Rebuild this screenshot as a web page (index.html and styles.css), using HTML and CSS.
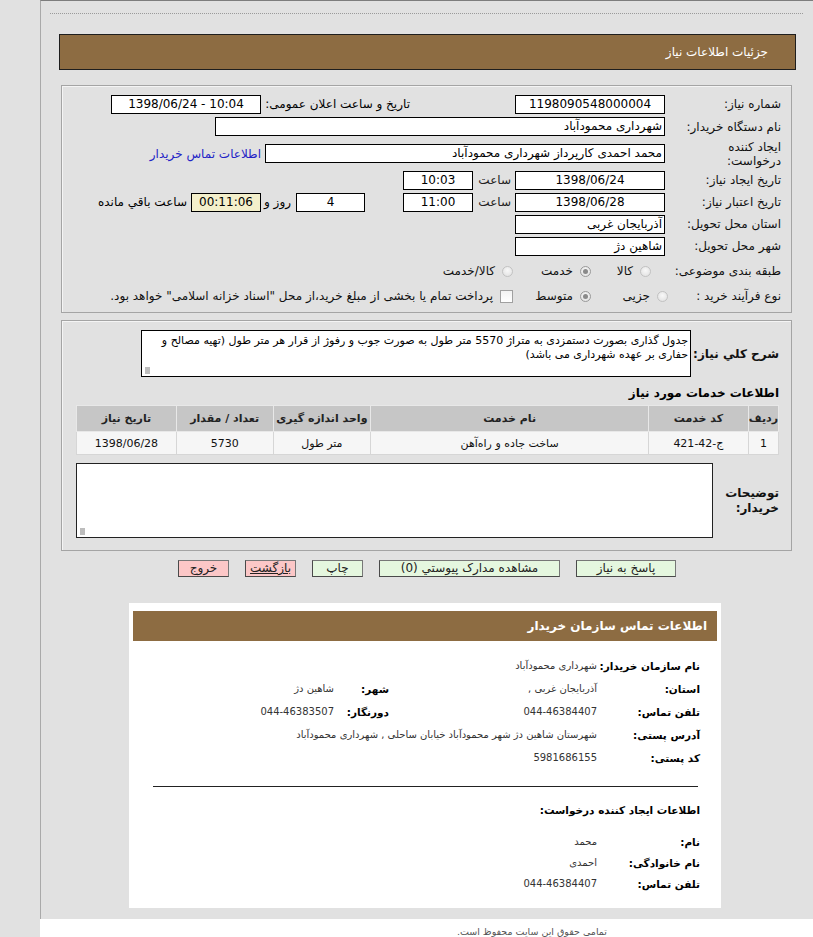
FILE: index.html
```html
<!DOCTYPE html>
<html lang="fa" dir="rtl">
<head>
<meta charset="utf-8">
<title>جزئیات اطلاعات نیاز</title>
<link rel="stylesheet" href="styles.css">
</head>
<body>
<div class="page">
  <div class="dots"></div>
  <div class="titlebar">جزئیات اطلاعات نیاز</div>

  <div class="box form">
    <div class="row h22">
      <div class="lbl">شماره نیاز:</div>
      <div class="inp w150 c">1198090548000004</div>
      <div class="ann">تاریخ و ساعت اعلان عمومی:</div>
      <div class="inp w150 c ltr">1398/06/24 - 10:04</div>
    </div>
    <div class="row h23">
      <div class="lbl">نام دستگاه خریدار:</div>
      <div class="inp w450">شهرداری محمودآباد</div>
    </div>
    <div class="row h31">
      <div class="lbl two">ایجاد کننده<br>درخواست:</div>
      <div class="inp w400">محمد احمدی کارپرداز شهرداری محمودآباد</div>
      <a class="link">اطلاعات تماس خریدار</a>
    </div>
    <div class="row h22">
      <div class="lbl">تاریخ ایجاد نیاز:</div>
      <div class="inp w150 c">1398/06/24</div>
      <div class="sa">ساعت</div>
      <div class="inp w70 c">10:03</div>
    </div>
    <div class="row h22">
      <div class="lbl">تاریخ اعتبار نیاز:</div>
      <div class="inp w150 c">1398/06/28</div>
      <div class="sa">ساعت</div>
      <div class="inp w70 c">11:00</div>
      <div class="inp w69 c days">4</div>
      <div class="ruz">روز و</div>
      <div class="inp w70 c remain">00:11:06</div>
      <div class="rest">ساعت باقي مانده</div>
    </div>
    <div class="row h22">
      <div class="lbl">استان محل تحویل:</div>
      <div class="inp w150">آذربایجان غربی</div>
    </div>
    <div class="row h22">
      <div class="lbl">شهر محل تحویل:</div>
      <div class="inp w150">شاهین دژ</div>
    </div>
    <div class="row h26">
      <div class="lbl">طبقه بندی موضوعی:</div>
      <div class="opt o1"><span class="radio"></span><span>کالا</span></div>
      <div class="opt o2"><span class="radio on"></span><span>خدمت</span></div>
      <div class="opt o3"><span class="radio"></span><span>کالا/خدمت</span></div>
    </div>
    <div class="row h24">
      <div class="lbl">نوع فرآیند خرید :</div>
      <div class="opt o1b"><span class="radio"></span><span>جزیی</span></div>
      <div class="opt o2"><span class="radio on"></span><span>متوسط</span></div>
      <div class="opt o3"><span class="check"></span><span>پرداخت تمام یا بخشی از مبلغ خرید،از محل "اسناد خزانه اسلامی" خواهد بود.</span></div>
    </div>
  </div>

  <div class="box desc">
    <div class="drow">
      <div class="blbl">شرح کلي نیاز:</div>
      <div class="area a1">جدول گذاری بصورت دستمزدی به متراژ 5570 متر طول به صورت جوب و رفوژ از قرار هر متر طول (تهیه مصالح و<br>حفاری بر عهده شهرداری می باشد)<span class="grip"></span></div>
    </div>
    <div class="sect">اطلاعات خدمات مورد نیاز</div>
    <table class="grid">
      <thead>
        <tr>
          <th class="c1">ردیف</th>
          <th class="c2">کد خدمت</th>
          <th class="c3">نام خدمت</th>
          <th class="c4">واحد اندازه گیری</th>
          <th class="c5">تعداد / مقدار</th>
          <th class="c6">تاریخ نیاز</th>
        </tr>
      </thead>
      <tbody>
        <tr>
          <td>1</td>
          <td>ج-42-421</td>
          <td>ساخت جاده و راه‌آهن</td>
          <td>متر طول</td>
          <td>5730</td>
          <td>1398/06/28</td>
        </tr>
      </tbody>
    </table>
    <div class="drow notes">
      <div class="blbl nl">توضیحات<br>خریدار:</div>
      <div class="area a2"><span class="grip"></span></div>
    </div>
  </div>

  <div class="buttons">
    <div class="btn green b100">پاسخ به نیاز</div>
    <div class="btn green b181">مشاهده مدارک پیوستي (0)</div>
    <div class="btn green b51">چاپ</div>
    <div class="btn pink b51 ul">بازگشت</div>
    <div class="btn pink b51">خروج</div>
  </div>

  <div class="card">
    <div class="cardhead">اطلاعات تماس سازمان خریدار</div>
    <div class="info">
      <div class="k">نام سازمان خریدار:</div>
      <div class="v span3">شهرداری محمودآباد</div>

      <div class="k">استان:</div>
      <div class="v">آذربایجان غربی ,</div>
      <div class="k">شهر:</div>
      <div class="v">شاهین دژ</div>

      <div class="k">تلفن تماس:</div>
      <div class="v">044-46384407</div>
      <div class="k">دورنگار:</div>
      <div class="v">044-46383507</div>

      <div class="k">آدرس پستی:</div>
      <div class="v span3">شهرستان شاهین دژ شهر محمودآباد خیابان ساحلی , شهرداری محمودآباد</div>

      <div class="k">کد پستی:</div>
      <div class="v span3">5981686155</div>
    </div>
    <div class="rule"></div>
    <div class="subhead">اطلاعات ایجاد کننده درخواست:</div>
    <div class="info info2">
      <div class="k">نام:</div>
      <div class="v span3">محمد</div>
      <div class="k">نام خانوادگی:</div>
      <div class="v span3">احمدی</div>
      <div class="k">تلفن تماس:</div>
      <div class="v span3">044-46384407</div>
    </div>
  </div>
</div>
<div class="footer"><span class="copy">تمامی حقوق این سایت محفوظ است.</span></div>
</body>
</html>
```
FILE: styles.css
```css
* { box-sizing: border-box; }
html, body { margin: 0; padding: 0; }
body {
  background: #e1e1e1;
  font-family: "DejaVu Sans", sans-serif;
  font-size: 12px;
  color: #000;
  direction: rtl;
}
.page {
  margin-left: 40px;
  border-left: 1px solid #a9a9a9;
  border-top: 1px solid #7d7d7d;
  padding: 12px 0 11px;
}
.dots {
  margin: 0 10px 0 9px;
  border-top: 1px dotted #9a9a9a;
}
.titlebar {
  margin: 20px 17px 0 18px;
  height: 36px;
  border: 1px solid #1e1e1e;
  background: #8d6c42;
  color: #fff;
  font-size: 12px;
  line-height: 34px;
  padding-right: 27px;
}
.box {
  margin: 0 21px 0 20px;
  border: 1px solid #a4a4a4;
  box-shadow: inset 1px 1px 0 #f4f4f4;
}
.form {
  margin-top: 15px;
  padding: 7px 10px 4px 10px;
}
.row {
  display: flex;
  align-items: center;
}
.h22 { height: 22px; }
.h23 { height: 23px; }
.h31 { height: 31px; }
.h26 { height: 26px; margin-top: 1px; }
.h24 { height: 24px; }
.lbl {
  width: 116px;
  flex: none;
  line-height: 14px;
  color: #111;
}
.inp {
  flex: none;
  height: 19px;
  border: 1px solid #000;
  background: #fff;
  line-height: 17px;
  padding: 0 2px;
  white-space: nowrap;
  overflow: hidden;
}
.inp.c { text-align: center; }
.ltr { direction: ltr; }
.w150 { width: 150px; }
.w450 { width: 450px; }
.w400 { width: 400px; }
.w70 { width: 70px; }
.w69 { width: 69px; }
.ann {
  flex: none;
  width: 149px;
  margin-right: 105px;
}
.link {
  color: #2323c6;
  margin-right: 4px;
  cursor: pointer;
}
.sa {
  flex: none;
  width: 42px;
  padding-right: 4px;
  color: #222;
}
.days { margin-right: 38px; }
.ruz {
  flex: none;
  width: 35px;
  padding-right: 5px;
}
.remain { background: #f3efcb; }
.rest { margin-right: 4px; }
.opt {
  flex: none;
  display: flex;
  align-items: center;
  gap: 7px;
  color: #111;
}
.o1 { width: 72px; padding-right: 14px; }
.o1b { width: 75px; margin-right: -3px; }
.o2 { width: 78px; padding-right: 2px; }
.o3 { padding-right: 2px; }
.radio {
  flex: none;
  width: 11px;
  height: 11px;
  border-radius: 50%;
  border: 1px solid #c2c2c2;
  background: radial-gradient(circle at 50% 40%, #f8f8f8, #dedede);
  position: relative;
}
.radio.on { border-color: #9a9a9a; }
.radio.on::after {
  content: "";
  position: absolute;
  left: 2px;
  top: 2px;
  width: 5px;
  height: 5px;
  border-radius: 50%;
  background: #8a8a8a;
}
.check {
  flex: none;
  width: 13px;
  height: 13px;
  border: 1px solid #a0a0a0;
  background: linear-gradient(#f2f2f2, #ffffff);
}
.desc {
  margin-top: 7px;
  padding: 9px 12px 12px 13px;
}
.drow {
  display: flex;
  align-items: center;
}
.blbl {
  flex: none;
  width: 88px;
  font-weight: bold;
  font-size: 12px;
  color: #111;
}
.area {
  flex: none;
  position: relative;
  background: #fff;
  border: 1px solid #000;
  font-size: 11px;
  line-height: 14px;
  padding: 3px 2px 0 2px;
  white-space: nowrap;
  overflow: hidden;
}
.a1 { width: 550px; height: 47px; }
.notes { margin-top: 8px; }
.nl { width: 66px; line-height: 15px; }
.a2 { width: 637px; height: 75px; border-color: #222; }
.grip {
  position: absolute;
  left: 3px;
  bottom: 2px;
  width: 5px;
  height: 7px;
  background-image: radial-gradient(circle, #b8b8b8 0.7px, transparent 0.8px);
  background-size: 2px 2px;
}
.sect {
  margin-top: 8px;
  font-weight: bold;
  font-size: 12px;
  height: 20px;
  line-height: 16px;
}
.grid {
  width: 703px;
  border-collapse: collapse;
  border: 1px solid #c2c2c2;
  font-size: 11px;
}
.grid th {
  background: #c6c6c6;
  height: 26px;
  font-weight: bold;
  color: #222;
  border: 1px solid #e8e8e8;
  padding: 0;
}
.grid td {
  background: #f6f6f6;
  height: 23px;
  text-align: center;
  border: 1px solid #d6d6d6;
  padding: 0;
  color: #111;
}
.c1 { width: 28px; }
.c2 { width: 100px; }
.c3 { width: 279px; }
.c4 { width: 98px; }
.c5 { width: 97px; }
.c6 { width: 100px; }
.buttons {
  margin-top: 9px;
  display: flex;
  justify-content: center;
  gap: 16px;
}
.btn {
  height: 17px;
  border: 1px solid #4a4a4a;
  border-top-color: #777;
  border-right-color: #777;
  line-height: 15px;
  text-align: center;
  font-size: 12px;
  color: #222;
}
.green { background: #e5f7df; }
.pink { background: #fcc7c7; }
.ul { text-decoration: underline; }
.b100 { width: 100px; }
.b181 { width: 181px; }
.b51 { width: 51px; }
.card {
  margin: 26px 92px 0 88px;
  background: #fff;
  padding: 8px 4px 14px;
}
.cardhead {
  height: 30px;
  background: #8d6c42;
  color: #fff;
  font-weight: bold;
  font-size: 12px;
  line-height: 30px;
  padding-right: 10px;
}
.info {
  display: grid;
  grid-template-columns: 103px 208px 55px 1fr;
  grid-auto-rows: 23px;
  align-items: center;
  padding-right: 17px;
  margin-top: 13px;
}
.info2 {
  grid-auto-rows: 21px;
  margin-top: 15px;
}
.k {
  font-weight: bold;
  font-size: 10.5px;
  letter-spacing: -0.3px;
  color: #000;
  white-space: nowrap;
}
.v {
  font-size: 10px;
  color: #333;
  white-space: nowrap;
}
.span3 { grid-column: span 3; }
.rule {
  margin: 17px 19px 0 20px;
  border-top: 1px solid #222;
}
.subhead {
  margin-top: 17px;
  padding-right: 17px;
  font-weight: bold;
  font-size: 10.5px;
  letter-spacing: -0.3px;
}
.footer {
  margin-left: 40px;
  background: #fff;
  height: 30px;
  padding-top: 7px;
  display: flex;
  justify-content: flex-start;
}
.copy {
  margin-right: 206px;
  font-size: 9.5px;
  color: #555;
}
```
